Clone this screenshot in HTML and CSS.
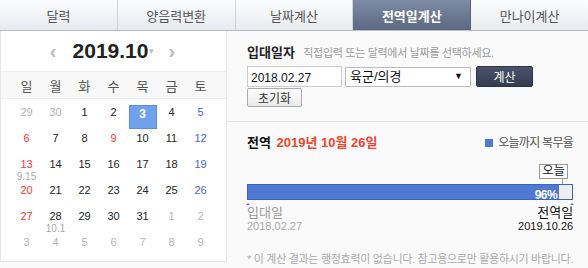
FILE: index.html
```html
<!DOCTYPE html>
<html lang="ko">
<head>
    <meta charset="UTF-8">
    <title>전역일계산</title>
    <link rel="stylesheet" href="styles.css">
</head>
<body>
<div class="tabs">
    <a href="#" class="tab">달력</a>
    <a href="#" class="tab">양음력변환</a>
    <a href="#" class="tab">날짜계산</a>
    <a href="#" class="tab active">전역일계산</a>
    <a href="#" class="tab">만나이계산</a>
</div>

<div class="main">
    <!-- 달력 -->
    <div class="calendar">
        <div class="cal-head">
            <span class="arrow">‹</span>
            <span class="month">2019.10</span>
            <span class="caret">▾</span>
            <span class="arrow">›</span>
        </div>
        <div class="week">
            <span>일</span><span>월</span><span>화</span><span>수</span><span>목</span><span>금</span><span>토</span>
        </div>
        <div class="days">
            <span class="day other">29</span>
            <span class="day other">30</span>
            <span class="day">1</span>
            <span class="day">2</span>
            <span class="day sel">3</span>
            <span class="day">4</span>
            <span class="day sat">5</span>

            <span class="day sun">6</span>
            <span class="day">7</span>
            <span class="day">8</span>
            <span class="day sun">9</span>
            <span class="day">10</span>
            <span class="day">11</span>
            <span class="day sat">12</span>

            <span class="day sun">13<em>9.15</em></span>
            <span class="day">14</span>
            <span class="day">15</span>
            <span class="day">16</span>
            <span class="day">17</span>
            <span class="day">18</span>
            <span class="day sat">19</span>

            <span class="day sun">20</span>
            <span class="day">21</span>
            <span class="day">22</span>
            <span class="day">23</span>
            <span class="day">24</span>
            <span class="day">25</span>
            <span class="day sat">26</span>

            <span class="day sun">27</span>
            <span class="day">28<em>10.1</em></span>
            <span class="day">29</span>
            <span class="day">30</span>
            <span class="day">31</span>
            <span class="day other">1</span>
            <span class="day other">2</span>

            <span class="day other">3</span>
            <span class="day other">4</span>
            <span class="day other">5</span>
            <span class="day other">6</span>
            <span class="day other">7</span>
            <span class="day other">8</span>
            <span class="day other">9</span>
        </div>
    </div>

    <!-- 계산 -->
    <div class="calc">
        <div class="form">
            <div class="form-title">
                <strong>입대일자</strong>
                <span class="hint">직접입력 또는 달력에서 날짜를 선택하세요.</span>
            </div>
            <div class="form-row">
                <input type="text" class="date-input" value="2018.02.27">
                <label class="select-wrap">
                    <select class="branch">
                        <option>육군/의경</option>
                        <option>해군</option>
                        <option>공군</option>
                    </select>
                    <span class="select-arrow">▼</span>
                </label>
                <button type="button" class="btn-calc">계산</button>
            </div>
            <button type="button" class="btn-reset">초기화</button>
        </div>

        <div class="result">
            <div class="result-head">
                <div class="result-title">전역 <span class="end-date">2019년 10월 26일</span></div>
                <div class="legend"><i></i>오늘까지 복무율</div>
            </div>
            <div class="progress">
                <div class="today">오늘</div>
                <div class="bar">
                    <div class="fill" style="width: 96%;"><b>96%</b></div>
                </div>
            </div>
            <div class="ends">
                <div class="start">
                    <div class="label">입대일</div>
                    <div class="date">2018.02.27</div>
                </div>
                <div class="finish">
                    <div class="label">전역일</div>
                    <div class="date">2019.10.26</div>
                </div>
            </div>
            <p class="note">* 이 계산 결과는 행정효력이 없습니다. 참고용으로만 활용하시기 바랍니다.</p>
        </div>
    </div>
</div>
</body>
</html>
```

FILE: styles.css
```css
/* 전역일계산 */
:root {
    --line: #d6d9de;
    --blue: #5079d3;
    --red: #f0442c;
    --gray: #aaa;
}

body {
    margin: 0;
    background: #fafafa;
    font-family: 'Liberation Sans', 'Noto Sans CJK KR', sans-serif;
    color: #222;
    width: 588px;
    height: 268px;
    overflow: hidden;
}

/* 탭 */
.tabs {
    display: flex;
    height: 31px;
    border-bottom: 1px solid #b8bcc4;
    box-sizing: border-box;
}

.tab {
    flex: 1;
    display: flex;
    align-items: center;
    justify-content: center;
    background: linear-gradient(#fbfcfd, #e8ebef);
    border-right: 1px solid #cfd3d8;
    color: #555;
    font-size: 13px;
    text-decoration: none;
}

.tab:last-child {
    border-right: none;
}

.tab.active {
    background: linear-gradient(#7d8ca4, #5a6981);
    border-color: #55637a;
    color: #fff;
    font-weight: bold;
}

.main {
    display: flex;
    align-items: flex-start;
}

/* 달력 */
.calendar {
    width: 228px;
    box-sizing: border-box;
    background: #fff;
    border: 1px solid #e6e6e6;
    border-top: none;
}

.cal-head {
    height: 40px;
    display: flex;
    align-items: center;
    justify-content: center;
    gap: 6px;
}

.arrow {
    color: #bbb;
    font-size: 20px;
    font-weight: bold;
    margin: 0 8px;
    line-height: 1;
}

.arrow:first-child {
    margin: 0 10px 0 6px;
}

.month {
    font-size: 21px;
    font-weight: bold;
    color: #222;
}

.caret {
    color: #bbb;
    font-size: 9px;
    margin-left: -5px;
}

.week {
    display: grid;
    grid-template-columns: repeat(7, 29px);
    padding: 0 11px;
    height: 28px;
    align-items: center;
    background: #f8f8f8;
    border-top: 1px solid #eee;
    border-bottom: 1px solid #eee;
    box-sizing: border-box;
    font-size: 13px;
    color: #555;
    text-align: center;
}

.days {
    display: grid;
    grid-template-columns: repeat(7, 29px);
    grid-auto-rows: 26px;
    padding: 6px 11px 0;
    font-size: 11px;
    text-align: center;
}

.day {
    display: flex;
    flex-direction: column;
    align-items: center;
    line-height: 14px;
    color: #222;
}

.day em {
    font-style: normal;
    font-size: 10px;
    line-height: 12px;
    color: #aaa;
}

.day.other { color: #b4b4b4; }
.day.sun { color: #f33; }
.day.sat { color: #4a63c8; }

.day.sel {
    width: 28px;
    height: 24px;
    box-sizing: border-box;
    margin: 0 auto;
    padding-top: 1px;
    background: #6fa2ea;
    border: 1px solid #5d8fd8;
    color: #fff;
    font-weight: bold;
    font-size: 12px;
}

/* 계산 */
.calc {
    flex: 1;
}

.form {
    padding: 14px 19px 14px 20px;
    border-bottom: 1px solid #e6e6e6;
}

.form-title {
    line-height: 14px;
    height: 14px;
    white-space: nowrap;
}

.form-title strong {
    font-size: 13px;
    color: #222;
}

.hint {
    font-size: 11px;
    color: #999;
    margin-left: 4px;
    letter-spacing: -0.3px;
}

.form-row {
    display: flex;
    align-items: center;
    margin-top: 7px;
}

.date-input {
    width: 95px;
    height: 21px;
    box-sizing: border-box;
    border: 1px solid #ccc;
    padding: 3px 3px 0;
    font-family: inherit;
    font-size: 12px;
    color: #111;
    background: #fff;
}

.select-wrap {
    position: relative;
    margin-left: 3px;
}

.branch {
    appearance: none;
    width: 126px;
    height: 20px;
    border: 1px solid #bbb;
    background: #fff;
    padding: 0 4px;
    font-family: inherit;
    font-size: 13px;
    color: #111;
    display: block;
}

.select-arrow {
    position: absolute;
    right: 8px;
    top: 4px;
    font-size: 9px;
    color: #111;
    pointer-events: none;
}

.btn-calc {
    margin-left: 5px;
    width: 57px;
    height: 21px;
    border: 1px solid #2c3344;
    border-radius: 2px;
    background: linear-gradient(#4a5369, #343c50);
    color: #fff;
    font-family: inherit;
    font-size: 12px;
    padding: 0;
}

.btn-reset {
    display: block;
    margin-top: 1px;
    width: 55px;
    height: 19px;
    border: 1px solid #aaa;
    border-radius: 2px;
    background: linear-gradient(#fff, #e9e9e9);
    color: #333;
    font-family: inherit;
    font-size: 12px;
    padding: 0;
}

.result {
    padding: 14px 19px 0 20px;
}

.result-head {
    display: flex;
    justify-content: space-between;
    align-items: center;
    line-height: 14px;
}

.result-title {
    font-size: 13px;
    font-weight: bold;
    color: #111;
}

.end-date {
    color: var(--red);
    margin-left: 2px;
}

.legend {
    display: flex;
    align-items: center;
    font-size: 12px;
    color: #555;
    letter-spacing: -0.7px;
}

.legend i {
    width: 8px;
    height: 8px;
    background: var(--blue);
    margin-right: 5px;
}

.progress {
    position: relative;
    margin-top: 34px;
}

.today {
    position: absolute;
    right: 5px;
    top: -20px;
    width: 29px;
    height: 15px;
    box-sizing: border-box;
    border: 1px solid #999;
    background: #fff;
    font-size: 12px;
    line-height: 13px;
    text-align: center;
    color: #111;
}

.today::after {
    content: '';
    position: absolute;
    right: 4px;
    top: 14px;
    height: 6px;
    border-left: 1px solid #999;
}

.bar {
    height: 16px;
    box-sizing: border-box;
    background: #eee;
    border: 1px solid #3b63c4;
    position: relative;
}

.bar::before,
.bar::after {
    content: '';
    position: absolute;
    bottom: -6px;
    border: 2px solid transparent;
    border-bottom-color: var(--blue);
}

.bar::before { left: -2px; }
.bar::after { right: -2px; }

.fill {
    height: 100%;
    background: var(--blue);
    text-align: right;
    box-sizing: border-box;
    padding-right: 2px;
}

.fill b {
    color: #fff;
    font-size: 12px;
    line-height: 14px;
    letter-spacing: -0.5px;
}

.ends {
    display: flex;
    justify-content: space-between;
    margin-top: 6px;
}

.label {
    font-size: 13px;
    line-height: 14px;
}

.date {
    font-size: 11px;
    line-height: 12px;
}

.start {
    color: #999;
}

.start .date {
    color: #aaa;
}

.finish {
    text-align: right;
    color: #111;
}

.note {
    margin: 20px 0 0;
    font-size: 11px;
    line-height: 14px;
    color: #aaa;
    letter-spacing: -0.3px;
    white-space: nowrap;
}
```
